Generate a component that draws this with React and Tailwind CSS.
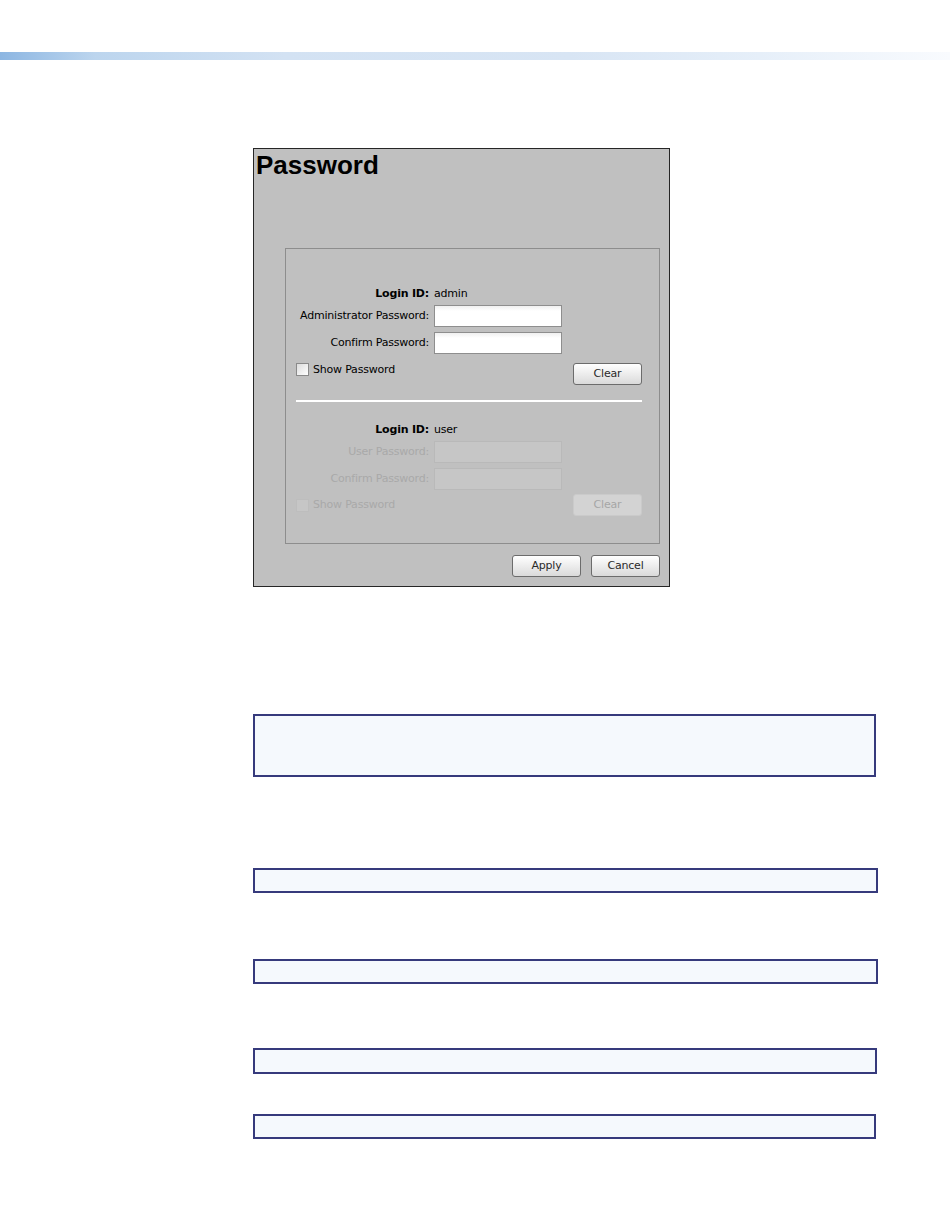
import React from 'react';

const ui = "font-['DejaVu_Sans',sans-serif] text-[11px] tracking-[-0.2px]";

function Field({ label, disabled }) {
  return (
    <div className="flex h-[22px] items-center">
      <div className={`w-[143px] text-right ${disabled ? 'text-[#a9a9a9]' : 'text-black'}`}>{label}</div>
      <div
        className={`ml-[5px] h-[22px] w-[128px] border ${
          disabled
            ? 'border-[#b9b9b9] bg-[#c6c6c6]'
            : 'border-[#8e8e8e] bg-gradient-to-b from-[#f0f0f0] to-white to-[25%]'
        }`}
      />
    </div>
  );
}

function LoginRow({ id }) {
  return (
    <div className="flex h-[22px] items-center">
      <div className="w-[143px] text-right font-bold text-black">Login ID:</div>
      <div className="ml-[5px] text-black">{id}</div>
    </div>
  );
}

function Btn({ children, disabled, className = '' }) {
  return (
    <div
      className={`flex h-[22px] w-[69px] items-center justify-center rounded-[3px] border ${
        disabled
          ? 'border-[#cacaca] bg-[#d3d3d3] text-[#a6a6a6]'
          : 'border-[#6c6c6c] bg-gradient-to-b from-white to-[#dadada] text-[#2a2a2a]'
      } ${className}`}
    >
      {children}
    </div>
  );
}

function Check({ disabled }) {
  return (
    <div
      className={`h-[13px] w-[13px] border ${
        disabled ? 'border-[#bdbdbd] bg-[#c6c6c6]' : 'border-[#8a8a8a] bg-gradient-to-br from-[#dcdcdc] to-white'
      }`}
    />
  );
}

function NoteBox({ className }) {
  return <div className={`border-2 border-[#363a7c] bg-[#f5f9fd] ${className}`} />;
}

export default function App() {
  return (
    <div className="min-h-[1229px] bg-white pt-[52px]">
      <div className="h-[8px] w-full bg-[linear-gradient(to_right,#8cb6e2_0%,#bcd5ee_10%,#d3e2f3_30%,#d8e5f4_60%,#e6eff9_80%,#f9fbfe_100%)]" />

      <div className="ml-[253px] mt-[88px] w-[417px]">
        {/* Password dialog */}
        <div className={`border border-[#262626] bg-[#c0c0c0] ${ui}`}>
          <div className="pl-[2px] pt-[3px] font-['Liberation_Sans',Arial,sans-serif] text-[26px] font-bold leading-[26px] tracking-normal text-black">
            Password
          </div>

          <div className="ml-[31px] mr-[9px] mt-[70px] border border-[#8d8d8d] pb-[27px] pt-[34px]">
            <LoginRow id="admin" />
            <Field label="Administrator Password:" />
            <div className="mt-[5px]">
              <Field label="Confirm Password:" />
            </div>
            <div className="mt-[9px] flex h-[22px] items-start pl-[10px] pr-[17px]">
              <Check />
              <span className="ml-[4px] mt-[-1px] text-black">Show Password</span>
              <Btn className="ml-auto">Clear</Btn>
            </div>

            <div className="ml-[10px] mr-[17px] mt-[15px] h-[2px] bg-white" />

            <div className="mt-[17px]">
              <LoginRow id="user" />
            </div>
            <Field label="User Password:" disabled />
            <div className="mt-[5px]">
              <Field label="Confirm Password:" disabled />
            </div>
            <div className="mt-[4px] flex h-[22px] items-center pl-[10px] pr-[17px]">
              <Check disabled />
              <span className="ml-[4px] text-[#a9a9a9]">Show Password</span>
              <Btn disabled className="ml-auto">Clear</Btn>
            </div>
          </div>

          <div className="mt-[11px] flex justify-end gap-[10px] pb-[9px] pr-[9px]">
            <Btn>Apply</Btn>
            <Btn>Cancel</Btn>
          </div>
        </div>

        <NoteBox className="mt-[127px] h-[63px] w-[623px]" />
        <NoteBox className="mt-[91px] h-[25px] w-[625px]" />
        <NoteBox className="mt-[66px] h-[25px] w-[625px]" />
        <NoteBox className="mt-[64px] h-[26px] w-[624px]" />
        <NoteBox className="mt-[40px] h-[25px] w-[623px]" />
      </div>
    </div>
  );
}
